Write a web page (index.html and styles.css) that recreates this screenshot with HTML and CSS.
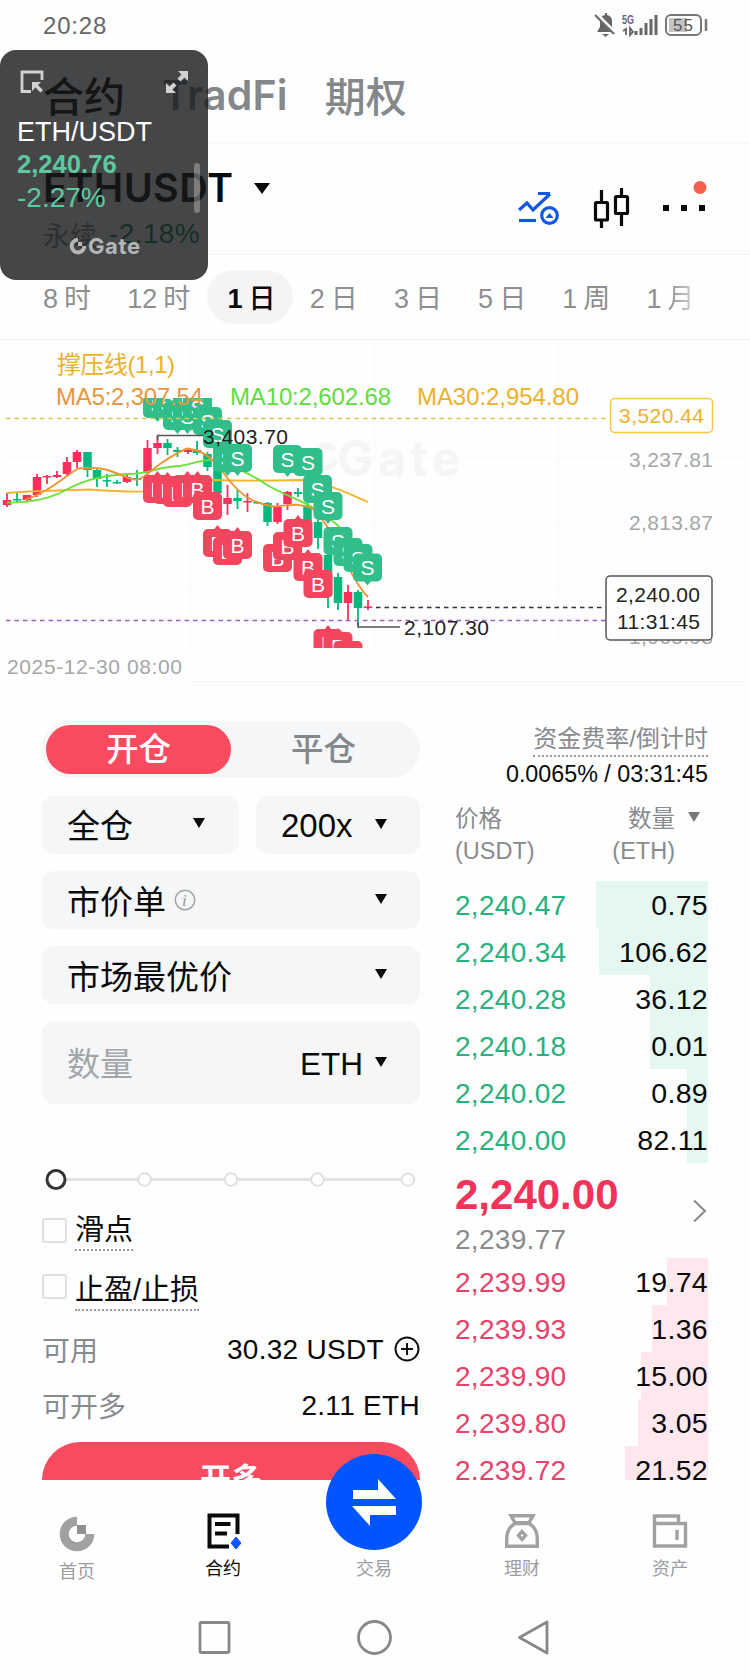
FILE: index.html
```html
<!DOCTYPE html>
<html lang="zh-CN">
<head>
  <meta charset="UTF-8">
  <meta name="viewport" content="width=device-width, initial-scale=1.0">
  <title>ETHUSDT 永续</title>
  <link rel="stylesheet" href="styles.css">
</head>
<body>
  <div class="phone">
    <!-- Status bar -->
    <div class="status">
      <span class="clock">20:28</span>
      <svg class="status-icons" width="116" height="26" viewBox="592 12 116 26">
        <path d="M597 32h18l-3-5v-6q0-5-5-6v-2h-2v2q-5 1-5 6v6z" fill="#666"/>
        <path d="M602 34h7l-3.500 3z" fill="#666"/>
        <path d="M596 14l20 20" stroke="#fefefe" stroke-width="4"/>
        <path d="M595 15l19 19" stroke="#666" stroke-width="2"/>
        <text x="622" y="24" class="net" textLength="12" lengthAdjust="spacingAndGlyphs">5G</text>
        <path d="M623 31l3-2v6M630 28v7l3-3z" stroke="#666" stroke-width="1.800" fill="none"/>
        <path d="M636 35v-4M641 35v-7M646 35v-12M651 35v-16M656 35v-20" stroke="#666" stroke-width="3"/>
        <rect x="669" y="18" width="18" height="14" fill="#c4c4c4"/>
        <rect x="666" y="15" width="35" height="20" rx="5" fill="none" stroke="#777" stroke-width="2"/>
        <path d="M706 19v12" stroke="#777" stroke-width="2.500"/>
        <text x="673" y="31" class="battery" textLength="20">55</text>
      </svg>
    </div>

    <!-- Product tabs -->
    <div class="tabs">
      <span class="tab active">合约</span>
      <span class="tab latin">TradFi</span>
      <span class="tab">期权</span>
    </div>

    <!-- Pair header -->
    <div class="pair">
      <div class="pair-info">
        <div class="pair-name">ETHUSDT <i class="caret big"></i></div>
        <div class="pair-sub"><span>永续</span><span class="change">-2.18%</span></div>
      </div>
      <svg class="pair-icons" width="190" height="56" viewBox="518 176 190 56">
        <g fill="none" stroke="#1257e3" stroke-width="3.200">
          <path d="M519 210l8-7 6 7 17-16M538 193.500h12"/>
          <path d="M519 220.500h17"/>
          <circle cx="549.500" cy="215.500" r="7.800"/>
        </g>
        <path d="M545.500 218l4-5 4 5z" fill="#1257e3"/>
        <g fill="none" stroke="#0a0a0a" stroke-width="3.200">
          <path d="M601.500 190v12M601.500 220v8M621.500 188v8M621.500 214v12"/>
          <rect x="595.500" y="202.500" width="12" height="17.500" rx="1"/>
          <rect x="615.500" y="196.500" width="12" height="17" rx="1"/>
        </g>
        <path d="M663 205h6v6h-6zM681 205h6v6h-6zM699 205h6v6h-6z" fill="#0a0a0a"/>
        <circle cx="700" cy="187.500" r="6.500" fill="#f55f50"/>
      </svg>
    </div>

    <!-- Intervals -->
    <div class="intervals">
      <span>8<b>时</b></span>
      <span>12<b>时</b></span>
      <span class="selected">1<b>日</b></span>
      <span>2<b>日</b></span>
      <span>3<b>日</b></span>
      <span>5<b>日</b></span>
      <span>1<b>周</b></span>
      <span>1<b>月</b></span>
    </div>

    <!-- Chart -->
    <svg class="chart" width="750" height="342" viewBox="0 340 750 342">
      <defs>
        <g id="s">
          <rect x="-14.500" y="-14" width="29" height="28" rx="5"/>
          <path d="M-4 13h8l-4 5z"/>
          <text class="letter" y="7.500">S</text>
        </g>
        <g id="b">
          <rect x="-14.500" y="-14" width="29" height="28" rx="5"/>
          <path d="M-4-13h8l-4-5z"/>
          <text class="letter" y="7.500">B</text>
        </g>
        <clipPath id="plot"><rect x="0" y="398" width="750" height="250"/></clipPath>
      </defs>
      <path class="grid" d="M190.500 340v310M374.500 340v310M558.500 340v300M6 457.500h738M6 522.500h738M6 586.500h738"/>
      <g class="watermark">
        <path d="M334 450a11 11 0 1 0 2 10" fill="none" stroke="#f4f6f6" stroke-width="6"/>
        <text x="337" y="476" textLength="124">Gate</text>
      </g>

      <!-- wicks, then bodies -->
      <path class="wick up" d="M7 493v14M27 495v6M37 474v23M47 475v9M57 471v7M67 457v19M77 450v18M127 475v8M147.500 440v35M157.500 436v18M188 448v6M227.500 485v30M247.500 493v19M277.500 503v21M287.500 491v19M348 585v35M368 600v10"/>
      <path class="wick down" d="M17 493v10M87.500 452v25M97 468v19M107 474v13M117 480v4M137 470v16M167.500 439v16M177.500 447v10M197 441v14M207.500 452v19M217.500 466v29M237.500 490v19M257.500 501v3M267.500 502v24M298 488v9M307.500 500v28M318 520v29M328 550v58M338 573v37M358 590v36"/>
      <path class="candle up" d="M7 500v5M27 495v5M37 477v18M47 476v1.500M57 475v2M67 462v12M77 452v10M127 477v5M147.500 448v24M157.500 443v5M188 450v2M227.500 498v6M247.500 501v1.500M277.500 507v15M287.500 492v12M348 592v11M368 606.500v1.500"/>
      <path class="candle down" d="M17 499v1.500M87.500 452v18M97 470v9M107 480v1.500M117 482v1.500M137 478v2M167.500 443v5M177.500 450v2M197 450v3M207.500 454v13M217.500 468v25M237.500 498v3M257.500 502v1.500M267.500 503v19M298 492v2M307.500 506v20M318 522v16M328 555v41M338 577v26M358 592v16"/>

      <path class="ma" stroke="#f2b52c" d="M7 493C30 491 70 490 90 489.500C110 491 130 492 143 491.500C165 489 185 481 213 480C245 481 275 480.500 300 480C325 482 345 492 368 502"/>
      <path class="ma" stroke="#6be03a" d="M7 502.500C30 503 45 500 60 493C80 482 95 476 127 474C150 474 155 467 180 466C195 463 205 459 215 460C235 468 250 473 267 485C290 498 305 501 320 512C335 522 345 530 352 545"/>
      <path class="ma" stroke="#ef9432" d="M25 499.500C45 494 60 480 78 468.500C100 466 110 470 127 477.500C140 484 145 475 160 464C175 454 183 449 188 448.500C207 451 215 462 225 475C240 495 252 503 273 506.500C290 506 295 502 312 508C330 525 340 550 353 576C360 588 365 594 368 597"/>

      <g clip-path="url(#plot)">
        <g class="sell">
          <use href="#s" x="157.500" y="404"/>
          <use href="#s" x="167.500" y="403"/>
          <use href="#s" x="177.500" y="416"/>
          <use href="#s" x="187.500" y="416"/>
          <use href="#s" x="197.500" y="407"/>
          <use href="#s" x="207.500" y="421"/>
          <use href="#s" x="217.500" y="434"/>
          <use href="#s" x="227.500" y="458"/>
          <use href="#s" x="237.500" y="458"/>
          <use href="#s" x="287.500" y="459"/>
          <use href="#s" x="308" y="462"/>
          <use href="#s" x="317.500" y="489"/>
          <use href="#s" x="328" y="506"/>
          <use href="#s" x="338" y="541"/>
          <use href="#s" x="348" y="552"/>
          <use href="#s" x="358" y="558"/>
          <use href="#s" x="367.500" y="567.500"/>
        </g>
        <g class="buy">
          <use href="#b" x="157.500" y="489"/>
          <use href="#b" x="167.500" y="490"/>
          <use href="#b" x="177.500" y="493"/>
          <use href="#b" x="187.500" y="489"/>
          <use href="#b" x="197.500" y="489"/>
          <use href="#b" x="207.500" y="506"/>
          <use href="#b" x="217.500" y="543"/>
          <use href="#b" x="227.500" y="551"/>
          <use href="#b" x="237.500" y="545"/>
          <use href="#b" x="277.500" y="558"/>
          <use href="#b" x="287.500" y="546"/>
          <use href="#b" x="298" y="533"/>
          <use href="#b" x="308" y="567"/>
          <use href="#b" x="318" y="584"/>
          <use href="#b" x="328" y="643"/>
          <use href="#b" x="338" y="646"/>
          <use href="#b" x="348" y="655"/>
        </g>
      </g>

      <path class="leader" d="M157.500 440v-4.500h46M358 622v5h42"/>
      <path class="dash" stroke="#d6c944" d="M6 418.500h604"/>
      <path class="dash" stroke="#9a5cc0" d="M6 620.500h600"/>
      <path class="dash" stroke="#333" d="M376 607.500h230"/>

      <text class="legend" x="57" y="373" fill="#eeb02b" textLength="118">撑压线(1,1)</text>
      <text class="legend" x="56" y="405" fill="#e9953f" textLength="147">MA5:2,307.54</text>
      <text class="legend" x="230" y="405" fill="#5fdc40" textLength="161">MA10:2,602.68</text>
      <text class="legend" x="417" y="405" fill="#eeb02b" textLength="162">MA30:2,954.80</text>

      <text class="tick dark" x="203" y="443.500" textLength="85">3,403.70</text>
      <text class="tick dark" x="404" y="634.500" textLength="85">2,107.30</text>
      <text class="tick" x="629" y="467" textLength="84">3,237.81</text>
      <text class="tick" x="629" y="529.500" textLength="84">2,813.87</text>
      <text class="tick" x="629" y="644" textLength="84">1,965.98</text>

      <rect x="610.500" y="398.500" width="102" height="34" rx="4" fill="#fefefe" stroke="#f3c94c" stroke-width="1.500"/>
      <text class="tick" x="619" y="423" fill="#eeb02b" textLength="85">3,520.44</text>
      <rect x="606" y="576" width="106" height="64" rx="4" fill="#fefefe" stroke="#555" stroke-width="1.500"/>
      <text class="tick dark" x="616" y="602" textLength="84">2,240.00</text>
      <text class="tick dark" x="617" y="629" textLength="83">11:31:45</text>

      <text class="tick" x="7" y="674" textLength="175">2025-12-30 08:00</text>
      <path d="M190 681.500h554" stroke="#f2f3f3"/>
    </svg>

    <!-- Order form and order book -->
    <div class="trade">
      <div class="form">
        <div class="toggle"><span class="on">开仓</span><span>平仓</span></div>
        <div class="pick-row">
          <div class="pick margin">全仓<i class="caret"></i></div>
          <div class="pick leverage">200x<i class="caret"></i></div>
        </div>
        <div class="pick">
          <span class="with-info">市价单
            <svg width="22" height="22" viewBox="0 0 22 22"><circle cx="11" cy="11" r="9.700" fill="none" stroke="#a3a5a7" stroke-width="1.500"/><text x="8" y="16.500" class="info">i</text></svg>
          </span>
          <i class="caret"></i>
        </div>
        <div class="pick">市场最优价<i class="caret"></i></div>
        <div class="pick amount"><span class="hint">数量</span><span class="unit">ETH <i class="caret"></i></span></div>

        <svg class="slider" width="378" height="24" viewBox="42 1167 378 24">
          <path d="M56 1179.500h352" stroke="#e2e2e2" stroke-width="3"/>
          <g fill="#fff" stroke="#dedede" stroke-width="1.800">
            <circle cx="144.500" cy="1179.500" r="6.300"/>
            <circle cx="231" cy="1179.500" r="6.300"/>
            <circle cx="317.500" cy="1179.500" r="6.300"/>
            <circle cx="408" cy="1179.500" r="6.300"/>
          </g>
          <circle cx="56" cy="1179.500" r="9" fill="#fff" stroke="#333" stroke-width="3"/>
        </svg>

        <div class="check"><i class="box"></i><span>滑点</span></div>
        <div class="check second"><i class="box"></i><span>止盈/止损</span></div>

        <div class="balance">
          <span>可用</span>
          <strong>30.32 USDT
            <svg width="26" height="26" viewBox="0 0 26 26"><path d="M13 7v12M7 13h12" stroke="#111" stroke-width="2"/><circle cx="13" cy="13" r="11.500" fill="none" stroke="#111" stroke-width="2"/></svg>
          </strong>
        </div>
        <div class="balance"><span>可开多</span><strong>2.11 ETH</strong></div>
        <div class="open-long">开多</div>
      </div>

      <div class="book">
        <div class="funding"><span>资金费率/倒计时</span></div>
        <div class="countdown">0.0065% / 03:31:45</div>
        <div class="book-head">
          <div>价格<br>(USDT)</div>
          <div class="qty-head">数量<br>(ETH)</div>
          <i class="caret gray"></i>
        </div>
        <div class="rows bids">
          <div class="row"><i style="width:112px"></i><span>2,240.47</span><em>0.75</em></div>
          <div class="row"><i style="width:109px"></i><span>2,240.34</span><em>106.62</em></div>
          <div class="row"><i style="width:58px"></i><span>2,240.28</span><em>36.12</em></div>
          <div class="row"><i style="width:58px"></i><span>2,240.18</span><em>0.01</em></div>
          <div class="row"><i style="width:21px"></i><span>2,240.02</span><em>0.89</em></div>
          <div class="row"><i style="width:21px"></i><span>2,240.00</span><em>82.11</em></div>
        </div>
        <div class="last">
          <div>
            <div class="last-price">2,240.00</div>
            <div class="mark-price">2,239.77</div>
          </div>
          <svg width="16" height="24" viewBox="0 0 16 24"><path d="M2 1.500l11 10.500-11 10.500" fill="none" stroke="#888" stroke-width="2"/></svg>
        </div>
        <div class="rows asks">
          <div class="row"><i style="width:41px"></i><span>2,239.99</span><em>19.74</em></div>
          <div class="row"><i style="width:56px"></i><span>2,239.93</span><em>1.36</em></div>
          <div class="row"><i style="width:67px"></i><span>2,239.90</span><em>15.00</em></div>
          <div class="row"><i style="width:70px"></i><span>2,239.80</span><em>3.05</em></div>
          <div class="row"><i style="width:83px"></i><span>2,239.72</span><em>21.52</em></div>
        </div>
      </div>
    </div>

    <!-- Bottom navigation -->
    <div class="nav">
      <div class="nav-item home">
        <svg width="36" height="36" viewBox="0 0 36 36"><path d="M18 5.200A12.800 12.800 0 1 0 30.800 18" fill="none" stroke="#9fa1a3" stroke-width="9"/><path d="M18 9h9v9h-9z" fill="#8f9193"/></svg>
        首页
      </div>
      <div class="nav-item current">
        <svg width="36" height="36" viewBox="0 0 36 36"><path d="M32.500 21V2.500h-28v31H24M10 11h15.500M10 20.500h12" fill="none" stroke="#0a0a0a" stroke-width="4"/><path d="M31 24l5 6-5 6-5-6z" fill="#0f55ff" stroke="#0f55ff" stroke-linejoin="round"/></svg>
        合约
      </div>
      <div class="nav-item">
        <span class="swap">
          <svg width="48" height="48" viewBox="0 0 48 48"><path d="M3 12h25V1l18 20H3zM46 28H2l18 20V37h26z" fill="#fff"/></svg>
        </span>
        交易
      </div>
      <div class="nav-item">
        <svg width="36" height="36" viewBox="0 0 36 36"><g fill="none" stroke="#9fa1a3" stroke-width="3.400"><path d="M7 2.700h22l-4 7H11z"/><path d="M11 10.500C5 14 2.700 20 2.700 26v7.300h30.600V26c0-6-2.300-12-8.300-15.500z"/><path d="M18 18.500l3.500 4-3.500 4-3.500-4z"/></g></svg>
        理财
      </div>
      <div class="nav-item">
        <svg width="36" height="36" viewBox="0 0 36 36"><path d="M2.500 10.500h31v22.500h-31zM2.500 11V3h24v7.500M25 17v10" fill="none" stroke="#9fa1a3" stroke-width="3.400"/></svg>
        资产
      </div>
    </div>

    <!-- System keys -->
    <svg class="sys" width="750" height="90" viewBox="0 1590 750 90">
      <g fill="none" stroke="#888" stroke-width="2.800" stroke-linejoin="round">
        <rect x="200" y="1622.500" width="29" height="30" rx="1.500"/>
        <circle cx="374.500" cy="1637.500" r="16"/>
        <path d="M547 1622v31l-27.500-15.500z"/>
      </g>
    </svg>

    <!-- Floating price window -->
    <div class="float">
      <div class="float-tools">
        <svg width="24" height="24" viewBox="0 0 24 24"><path d="M22 10V2H2v19.500h9" fill="none" stroke="#d2d2d2" stroke-width="2.800"/><path d="M12 12h9l-3 3 5 5-2.500 2.500-5-5-3.500 3.500z" fill="#d2d2d2"/></svg>
        <svg width="24" height="24" viewBox="0 0 24 24"><path d="M13 1h10v10l-3.500-3.500-4 4-3-3 4-4zM11 23H1V13l3.500 3.500 4-4 3 3-4 4z" fill="#d2d2d2"/></svg>
      </div>
      <div class="float-pair">ETH/USDT</div>
      <div class="float-price">2,240.76</div>
      <div class="float-change">-2.27%</div>
      <div class="float-logo">
        <svg width="18" height="18" viewBox="0 0 18 18"><path d="M9 2.800A6.300 6.300 0 1 0 15.300 9" fill="none" stroke="#b4b5b5" stroke-width="4"/><path d="M9 5h4v4H9z" fill="#b4b5b5"/></svg>Gate
      </div>
      <i class="handle"></i>
    </div>
  </div>
</body>
</html>
```

FILE: styles.css
```css
* {
  box-sizing: border-box;
}

body {
  margin: 0;
  background: #fefefe;
  color: #0a0a0a;
  font-family: "Liberation Sans", "Noto Sans CJK SC", sans-serif;
}

i, em {
  font-style: normal;
}

.phone {
  position: relative;
  width: 750px;
  height: 1680px;
  overflow: hidden;
}

.caret {
  flex: none;
  display: inline-block;
  border: 6.5px solid transparent;
  border-top: 10px solid #0a0a0a;
  border-bottom: 0;
}

.caret.big {
  border-width: 11px 8.5px 0;
}

.caret.gray {
  border-top-color: #777;
}

/* status bar */
.status {
  display: flex;
  justify-content: space-between;
  align-items: center;
  height: 50px;
  padding: 0 42px 0 43px;
}

.clock {
  font-size: 24px;
  letter-spacing: 0.8px;
  color: #666;
  padding-top: 2px;
}

.net {
  font-size: 13px;
  font-weight: bold;
  fill: #666;
}

.battery {
  font-size: 17px;
  fill: #555;
}

/* product tabs */
.tabs {
  display: flex;
  align-items: center;
  gap: 37px;
  height: 94px;
  padding: 0 43px 5px;
  border-bottom: 2px solid #f7f8f8;
}

.tab {
  font-size: 41px;
  font-weight: 500;
  color: #85888b;
}

.tab.latin {
  font-family: Inter, sans-serif;
  font-weight: 600;
  padding-top: 3px;
  letter-spacing: 0.2px;
}

.tab.active {
  color: #0a0a0a;
}

/* pair header */
.pair {
  display: flex;
  justify-content: space-between;
  height: 111px;
  padding: 21px 42px 0 43px;
  border-bottom: 1px solid #f1f2f2;
}

.pair-icons {
  margin-top: 11px;
}

.pair-name {
  display: flex;
  align-items: center;
  gap: 21px;
  height: 46px;
  font-family: Inter, sans-serif;
  font-size: 39.5px;
  font-weight: 600;
  letter-spacing: 0.4px;
}

.pair-sub {
  display: flex;
  align-items: center;
  gap: 12px;
  height: 46px;
  font-size: 27px;
  color: #85888b;
}

.change {
  color: #12875c;
  font-size: 28px;
  letter-spacing: 0.4px;
}

/* intervals */
.intervals {
  display: flex;
  align-items: center;
  gap: 36.2px;
  height: 85px;
  padding: 0 0 1px 43px;
  border-bottom: 1px solid #f1f2f2;
  font-size: 27px;
  color: #8d8f91;
}

.intervals span {
  display: flex;
  gap: 6px;
  height: 54px;
  padding-top: 2px;
  line-height: 54px;
}

.intervals b {
  font-weight: normal;
}

.intervals .selected {
  margin: 0 -20px 0 -19px;
  padding: 2px 18px 0 20px;
  border-radius: 27px;
  background: #f4f4f4;
  color: #0a0a0a;
  font-weight: bold;
}

.intervals .selected b {
  font-weight: 500;
}

.intervals span:last-child b {
  background: linear-gradient(90deg, #8d8f91, #d5d6d7);
  -webkit-background-clip: text;
  background-clip: text;
  color: transparent;
}

/* chart */
.chart {
  display: block;
}

.grid {
  stroke: #f9fafa;
  stroke-width: 1.5;
}

.watermark text {
  font-family: Inter, sans-serif;
  font-size: 49px;
  font-weight: bold;
  fill: #f4f6f6;
}

.wick {
  stroke-width: 1.8;
}

.candle {
  stroke-width: 8.5;
}

.up {
  stroke: #fb2f5b;
}

.down {
  stroke: #08b87c;
}

.ma {
  fill: none;
  stroke-width: 1.8;
}

.letter {
  font-size: 21px;
  text-anchor: middle;
  fill: #fff;
}

.sell {
  fill: #31be8b;
}

.buy {
  fill: #f2455e;
}

.leader {
  fill: none;
  stroke: #555;
  stroke-width: 1.5;
}

.dash {
  stroke-width: 1.5;
  stroke-dasharray: 4.5 4;
}

.legend {
  font-size: 24px;
}

.tick {
  font-size: 21px;
  fill: #a5a7a9;
}

.tick[fill] {
  fill: #eeb02b;
}

.tick.dark {
  fill: #222;
}

/* trade area */
.trade {
  display: flex;
  gap: 35px;
  height: 798px;
  padding: 39px 42px 0;
  overflow: hidden;
}

.form {
  width: 378px;
}

.toggle {
  display: flex;
  height: 57px;
  padding: 4px;
  border-radius: 29px;
  background: #f4f6f7;
  font-size: 32.5px;
  color: #85888b;
}

.toggle span {
  flex: 1;
  line-height: 51px;
  text-align: center;
  font-weight: 500;
}

.toggle .on {
  border-radius: 25px;
  background: #f94b60;
  color: #fff;
}

.pick-row {
  display: flex;
  gap: 17px;
  margin-top: 18px;
}

.pick {
  display: flex;
  flex: 1;
  justify-content: space-between;
  align-items: center;
  height: 58px;
  padding: 0 33px 1px 25px;
  border-radius: 12px;
  background: #f4f6f7;
  font-size: 33px;
}

.pick .caret {
  margin-bottom: 1px;
}

.form > .pick {
  margin-top: 17px;
}

.pick.margin {
  flex: 0 0 197px;
  padding: 0 34px 3px 25px;
}

.pick.leverage {
  padding: 2px 33px 0 25px;
}

.pick.leverage .caret {
  margin-bottom: 4px;
}

.with-info {
  display: flex;
  align-items: center;
  gap: 8px;
}

.info {
  font-family: "Liberation Serif", serif;
  font-size: 17px;
  font-style: italic;
  fill: #999;
}

.form > .pick.amount {
  height: 83px;
}

.hint {
  color: #a3a6a8;
}

.unit {
  display: flex;
  align-items: center;
  gap: 12px;
  padding-top: 4px;
  font-size: 31.5px;
}

.unit .caret {
  margin-bottom: 4px;
}

.slider {
  display: block;
  margin: 63px 0 22px;
}

.check {
  display: flex;
  gap: 8px;
  height: 60px;
}

.box {
  width: 25px;
  height: 25px;
  margin-top: 5px;
  border: 2px solid #dfe0e0;
  border-radius: 3px;
}

.check span {
  height: 38px;
  line-height: 34px;
  font-size: 29px;
  border-bottom: 2px dotted #999;
}

.second .box {
  margin-top: 1px;
}

.check.second {
  height: 49px;
}

.balance {
  display: flex;
  justify-content: space-between;
  align-items: center;
  height: 56px;
  font-size: 28px;
  color: #888b8e;
}

.balance span {
  margin-top: -3px;
}

.balance strong {
  display: flex;
  align-items: center;
  gap: 10px;
  font-weight: normal;
  letter-spacing: 0.3px;
  color: #0a0a0a;
}

.balance svg {
  margin-bottom: 3px;
}

.open-long {
  height: 76px;
  margin-top: 8px;
  border-radius: 38px;
  background: #f94b60;
  color: #fff;
  font-size: 31px;
  font-weight: bold;
  line-height: 76px;
  text-align: center;
}

/* order book */
.book {
  width: 253px;
}

.funding {
  height: 36px;
  text-align: right;
  font-size: 24px;
  line-height: 36px;
  color: #888b8e;
}

.funding span {
  display: inline-block;
  height: 36px;
  border-bottom: 2px dotted #999;
}

.countdown {
  height: 36px;
  line-height: 35px;
  font-size: 23.3px;
  text-align: right;
  white-space: nowrap;
}

.book-head {
  display: flex;
  height: 88px;
  padding-top: 10px;
  font-size: 23.5px;
  line-height: 32px;
  color: #888b8e;
}

.qty-head {
  flex: 1;
  text-align: right;
}

.book-head .caret {
  margin: 9px 8px 0 13px;
}

.row {
  position: relative;
  display: flex;
  justify-content: space-between;
  height: 47px;
  line-height: 49px;
  font-size: 28px;
  letter-spacing: 0.3px;
}

/* depth bar behind the quantity */
.row i {
  position: absolute;
  top: 0;
  right: 0;
  height: 47px;
}

.row span,
.row em {
  position: relative;
}

.row em {
  font-size: 28.5px;
}

.bids i {
  background: #e4f8f1;
}

.bids span {
  color: #27b180;
}

.asks i {
  background: #fee8ed;
}

.asks span {
  color: #e8416a;
}

.last {
  display: flex;
  justify-content: space-between;
  align-items: center;
  height: 95px;
}

.last-price {
  height: 50px;
  line-height: 54px;
  font-size: 42px;
  font-weight: bold;
  color: #f03359;
}

.mark-price {
  height: 36px;
  line-height: 43px;
  font-size: 28px;
  letter-spacing: 0.3px;
  color: #888b8e;
}

/* bottom navigation */
.nav {
  position: relative;
  display: flex;
  height: 110px;
  padding: 0 5px 0 4px;
}

.nav-item {
  display: flex;
  flex: 1;
  flex-direction: column;
  align-items: center;
  justify-content: flex-end;
  gap: 7px;
  padding: 0 2px 8px 0;
  font-size: 18px;
  line-height: 26px;
  color: #9b9da0;
}

.nav-item.home {
  padding: 0 0 5px;
}

.nav-item.current {
  padding-right: 5px;
  color: #0a0a0a;
}

/* raised button sticks out above the bar */
.swap {
  display: flex;
  flex: none;
  align-items: center;
  justify-content: center;
  width: 96px;
  height: 96px;
  margin-bottom: -1px;
  border-radius: 50%;
  background: #0055ff;
}

.sys {
  display: block;
}

/* floating price window */
.float {
  position: absolute;
  top: 50px;
  left: 0;
  width: 208px;
  height: 230px;
  padding: 20px 19px 0 17px;
  border-radius: 16px;
  background: rgba(22, 24, 25, 0.8);
}

.float-tools {
  display: flex;
  justify-content: space-between;
  height: 44px;
  padding-left: 3px;
}

.float-pair {
  height: 35px;
  line-height: 36px;
  font-size: 27px;
  color: #fff;
}

.float-price {
  height: 31px;
  line-height: 30px;
  font-size: 25.6px;
  font-weight: bold;
  color: #5cc9a0;
}

.float-change {
  height: 36px;
  line-height: 36px;
  font-size: 28px;
  color: #5cc9a0;
}

.float-logo {
  display: flex;
  align-items: center;
  gap: 1px;
  height: 24px;
  margin: 18px 0 0 52px;
  font-family: Inter, sans-serif;
  font-size: 22px;
  font-weight: bold;
  letter-spacing: 0.6px;
  color: #b4b5b5;
}

.handle {
  position: absolute;
  top: 113px;
  right: 8px;
  width: 6px;
  height: 50px;
  border-radius: 3px;
  background: rgba(255, 255, 255, 0.3);
}
```
